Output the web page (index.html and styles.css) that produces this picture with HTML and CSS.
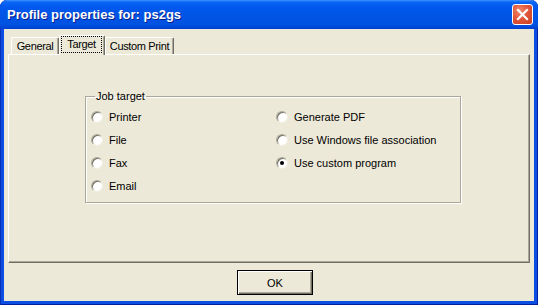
FILE: index.html
```html
<!DOCTYPE html>
<html lang="en">
<head>
    <meta charset="UTF-8">
    <title>Profile properties for: ps2gs</title>
    <link rel="stylesheet" href="styles.css">
</head>
<body>
    <div class="window">
        <div class="titlebar">
            <span class="title">Profile properties for: ps2gs</span>
            <button class="close-btn" aria-label="Close">
                <svg width="13" height="13" viewBox="0 0 13 13">
                    <path d="M2 2 L11 11 M11 2 L2 11" stroke="#fff" stroke-width="2.2" stroke-linecap="square"/>
                </svg>
            </button>
        </div>
        <div class="client">
            <div class="tabs">
                <div class="tab tab-general">General</div>
                <div class="tab tab-target selected"><span class="focus">Target</span></div>
                <div class="tab tab-custom">Custom Print</div>
            </div>
            <div class="panel">
                <fieldset class="group">
                    <legend>Job target</legend>
                    <div class="col left">
                        <label class="radio"><input type="radio" name="target"> Printer</label>
                        <label class="radio"><input type="radio" name="target"> File</label>
                        <label class="radio"><input type="radio" name="target"> Fax</label>
                        <label class="radio"><input type="radio" name="target"> Email</label>
                    </div>
                    <div class="col">
                        <label class="radio"><input type="radio" name="target"> Generate PDF</label>
                        <label class="radio"><input type="radio" name="target"> Use Windows file association</label>
                        <label class="radio"><input type="radio" name="target" checked> Use custom program</label>
                    </div>
                </fieldset>
            </div>
            <div class="buttons">
                <button class="ok-btn">OK</button>
            </div>
        </div>
    </div>
</body>
</html>
```

FILE: styles.css
```css
body{
    margin: 0;
    font-family: "Liberation Sans", Arial, sans-serif;
    font-size: 11px;
    color: #000;
}
.window{
    width: 538px;
    height: 305px;
    display: flex;
    flex-direction: column;
    background: #0a4ee4;
    border-radius: 7px 7px 0 0;
    box-shadow: inset 1px 0 #0831b8, inset -1px 0 #001ea0, inset 0 -1px #001ea0;
    overflow: hidden;
}
.titlebar{
    flex-shrink: 0;
    height: 29px;
    display: flex;
    align-items: center;
    justify-content: space-between;
    padding-left: 7px;
    border-radius: 7px 7px 0 0;
    background: linear-gradient(#3d95ff 0, #0a66f6 2px, #0058ee 7px, #0055e6 50%, #0052e0 85%, #003fd0 100%);
}
.title{
    color: #fff;
    font-weight: bold;
    font-size: 13px;
    text-shadow: 1px 1px #0a1f8c;
}
.close-btn{
    width: 21px;
    height: 21px;
    margin-right: 5px;
    padding: 0;
    border: 1px solid #fff;
    border-radius: 3px;
    background: radial-gradient(circle at 35% 30%, #f08a6c 0, #e2563a 45%, #c8401f 100%);
    display: flex;
    align-items: center;
    justify-content: center;
}
.client{
    flex: 1;
    margin: 0 4px 4px 4px;
    padding: 6px 4px 0 4px;
    background: #ece9d8;
    display: flex;
    flex-direction: column;
}
.tabs{
    flex-shrink: 0;
    display: flex;
    align-items: flex-end;
    height: 19px;
    padding-left: 3px;
}
.tab{
    height: 17px;
    line-height: 16px;
    text-align: center;
    white-space: nowrap;
    letter-spacing: -0.35px;
    border-top: 1px solid #fff;
    border-left: 1px solid #fff;
    border-right: 1px solid #716f64;
    border-radius: 2px 2px 0 0;
    box-shadow: inset -1px 0 #aca899;
    box-sizing: border-box;
}
.tab-general{
    width: 48px;
}
.tab-target{
    width: 46px;
}
.tab-custom{
    width: 69px;
}
.tab.selected{
    height: 20px;
    line-height: 17px;
    padding-left: 1px;
    margin-bottom: -1px;
    background: #ece9d8;
    position: relative;
    z-index: 1;
}
.focus{
    display: block;
    width: 41px;
    height: 17px;
    line-height: 16px;
    outline: 1px dotted #000;
    outline-offset: -1px;
}
.panel{
    flex-shrink: 0;
    height: 209px;
    box-sizing: border-box;
    border-top: 1px solid #fff;
    border-left: 1px solid #fff;
    border-right: 1px solid #716f64;
    border-bottom: 1px solid #716f64;
    box-shadow: inset -1px -1px #aca899;
    padding-top: 35px;
}
.group{
    width: 376px;
    margin: 0 0 0 76px;
    padding: 2px 0 5px 5px;
    border: 1px solid #aca899;
    box-shadow: 1px 1px 0 #fff, inset 1px 1px 0 #fff;
    display: flex;
    box-sizing: border-box;
}
.group legend{
    margin-left: 4px;
    padding: 0 1px;
    line-height: 13px;
}
.col{
    display: flex;
    flex-direction: column;
}
.col.left{
    width: 185px;
}
.radio{
    height: 23px;
    display: flex;
    align-items: center;
}
.radio input{
    appearance: none;
    -webkit-appearance: none;
    width: 12px;
    height: 12px;
    margin: 0 6px 0 0;
    border-radius: 50%;
    background: #fff;
    border: 1px solid;
    border-color: #aca899 #f1efe2 #f1efe2 #aca899;
    box-shadow: inset 1px 1px #716f64;
    position: relative;
}
.radio input:checked::after{
    content: "";
    position: absolute;
    left: 3px;
    top: 3px;
    width: 4px;
    height: 4px;
    border-radius: 50%;
    background: #000;
}
.buttons{
    display: flex;
    justify-content: center;
    padding-top: 7px;
}
.ok-btn{
    width: 76px;
    height: 25px;
    margin-left: 12px;
    padding: 0;
    font-family: "Liberation Sans", Arial, sans-serif;
    font-size: 11px;
    background: #ece9d8;
    border: 1px solid #000;
    box-shadow: inset 1px 1px #fff, inset -1px -1px #716f64, inset -2px -2px #aca899;
}
```
